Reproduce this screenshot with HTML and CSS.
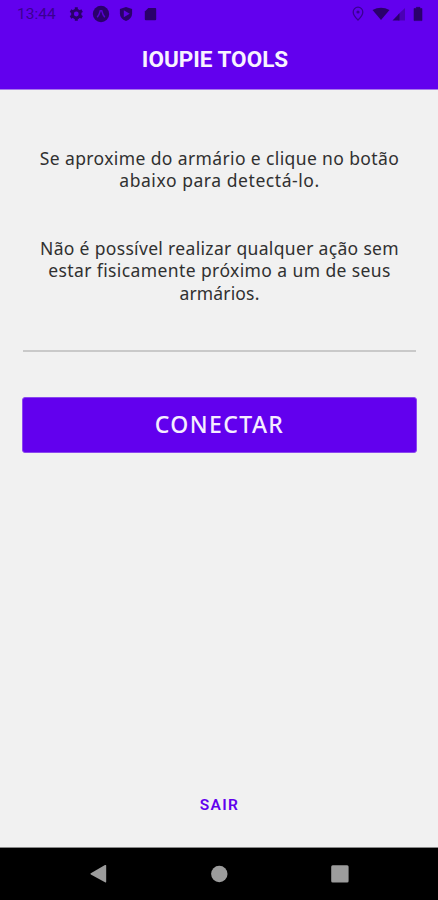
FILE: index.html
```html
<!DOCTYPE html>
<html lang="pt-BR">
<head>
    <meta charset="UTF-8">
    <meta name="viewport" content="width=device-width, initial-scale=1.0">
    <title>IOUPIE TOOLS</title>
    <link rel="stylesheet" href="styles.css">
</head>
<body>
    <header class="header">
        <div class="status-bar">
            <span class="clock">13:44</span>
            <svg class="status-left" width="90" height="18" viewBox="0 0 90 18">
                <!-- settings -->
                <g transform="translate(8.3 9)">
                    <circle r="3.8" fill="none" stroke="#2a006b" stroke-width="2.8"/>
                    <path d="M0-6.7V-4M0 4V6.7M-5.8-3.4L-3.6-2.1M3.6 2.1L5.8 3.4M-5.8 3.4L-3.6 2.1M3.6-2.1L5.8-3.4" stroke="#2a006b" stroke-width="3"/>
                </g>
                <!-- app -->
                <circle cx="33" cy="9" r="8.2" fill="#2a006b"/>
                <path d="M29.2 12.3Q31.4 9.8 32.3 5.7H33.7Q34.6 9.8 36.8 12.3" fill="none" stroke="#5700d3" stroke-width="1.5"/>
                <!-- play protect -->
                <path d="M58 2L64.1 4V8.5Q64.1 13.6 58 16Q51.9 13.6 51.9 8.5V4Z" fill="#2a006b"/>
                <path d="M55.8 5.2L61.7 8.7L55.8 12.2Z" fill="#5d00e2"/>
                <!-- sd card -->
                <path d="M80.3 3H87.3Q88.2 3 88.2 4V14.3Q88.2 15.3 87.2 15.3H77.8Q76.8 15.3 76.8 14.3V6.5Z" fill="#2a006b"/>
            </svg>
            <svg class="status-right" width="74" height="18" viewBox="0 0 74 18">
                <!-- location -->
                <path d="M7 15Q2.2 10.4 2.2 7A4.8 4.8 0 0 1 11.8 7Q11.8 10.4 7 15Z" fill="none" stroke="#3a0092" stroke-width="1.3"/>
                <circle cx="7" cy="7" r="1.6" fill="#3a0092"/>
                <!-- wifi -->
                <path d="M21.5 5Q30 0.5 38.5 5L30 15Z" fill="#2a006b"/>
                <!-- signal -->
                <path d="M54 3V15.5H47V9.5Z" fill="#4a00b4"/>
                <path d="M48.5 8.3V15.5H41.5Z" fill="#2a006b"/>
                <!-- battery -->
                <path d="M65.3 2.3H69V3.5H71V15.6H63V3.5H65.3Z" fill="#2a006b" stroke="#2a006b" stroke-width=".6" stroke-linejoin="round"/>
            </svg>
        </div>
        <h1>IOUPIE TOOLS</h1>
    </header>

    <main class="content">
        <p class="message">
            <span class="line-1">Se aproxime do armário e clique no botão</span><br>
            <span class="line-2">abaixo para detectá-lo.</span>
        </p>
        <p class="message">
            <span class="line-3">Não é possível realizar qualquer ação sem</span><br>
            <span class="line-4">estar fisicamente próximo a um de seus</span><br>
            <span class="line-5">armários.</span>
        </p>
        <hr>
        <button type="button" class="connect-btn">CONECTAR</button>
        <button type="button" class="exit-btn">SAIR</button>
    </main>

    <nav class="nav-bar">
        <svg width="20" height="20" viewBox="0 0 20 20"><path d="M2.8 9.2L17 1.1Q18.2.6 18.2 1.8V17.7Q18.2 18.9 17 18.3L2.8 10.4Q1.9 9.8 2.8 9.2Z" fill="#9c9c9c"/></svg>
        <svg width="20" height="20" viewBox="0 0 20 20"><circle cx="10.3" cy="10" r="8.2" fill="#9c9c9c"/></svg>
        <svg width="20" height="20" viewBox="0 0 20 20"><rect x="1.2" y="1.2" width="17.4" height="17.4" rx="1.5" fill="#9c9c9c"/></svg>
    </nav>
</body>
</html>
```
FILE: styles.css
```css
* {
    box-sizing: border-box;
}
body {
    margin: 0;
    height: 900px;
    display: flex;
    flex-direction: column;
    overflow: hidden;
    background-color: #f1f1f1;
    font-family: "Noto Sans", sans-serif;
}
.header {
    height: 90px;
    background-color: #6200ee;
    border-bottom: 1px solid #a879ea;
}
.status-bar {
    display: flex;
    align-items: center;
    height: 28px;
    padding: 0 13px 0 17px;
}
.clock {
    width: 51px;
    font-family: Roboto, sans-serif;
    font-size: 15.5px;
    color: #3a0092;
}
.status-right {
    margin-left: auto;
}
h1 {
    margin: 18px 0 0;
    padding-right: 8px;
    font-family: Roboto, sans-serif;
    font-size: 22.5px;
    line-height: 26px;
    font-weight: 700;
    text-align: center;
    color: #f8f2ff;
}
.content {
    flex: 1;
    display: flex;
    flex-direction: column;
    padding: 56.5px 21px 23px 22px;
}
.message {
    margin: 0 0 45.5px;
    font-size: 17.5px;
    line-height: 22.4px;
    text-align: center;
    white-space: nowrap;
    color: #303030;
}
.line-1 {
    letter-spacing: 0.38px;
}
.line-2 {
    letter-spacing: 0.56px;
}
.line-3 {
    letter-spacing: 0.33px;
}
.line-4 {
    letter-spacing: 0.4px;
}
.line-5 {
    letter-spacing: 0.15px;
}
hr {
    width: 393px;
    height: 2px;
    margin: 0 auto;
    border: none;
    background-color: #c9c9c9;
}
button {
    border: none;
    cursor: pointer;
}
.connect-btn {
    height: 56px;
    margin-top: 45px;
    padding: 0 0 2px;
    border: 1px solid #8b48ef;
    border-radius: 3px;
    background-color: #6200ee;
    color: #f5edff;
    font-family: "Noto Sans", sans-serif;
    font-size: 23px;
    font-weight: 500;
    letter-spacing: 1.4px;
}
.exit-btn {
    align-self: center;
    margin-top: auto;
    padding: 10px;
    background: none;
    color: #6200ee;
    font-family: Roboto, sans-serif;
    font-size: 15.5px;
    font-weight: 600;
    letter-spacing: 1.4px;
}
.nav-bar {
    display: flex;
    justify-content: space-between;
    height: 53px;
    padding: 16px 88px 0;
    border-top: 1px solid #888;
    background-color: #000;
}
```
